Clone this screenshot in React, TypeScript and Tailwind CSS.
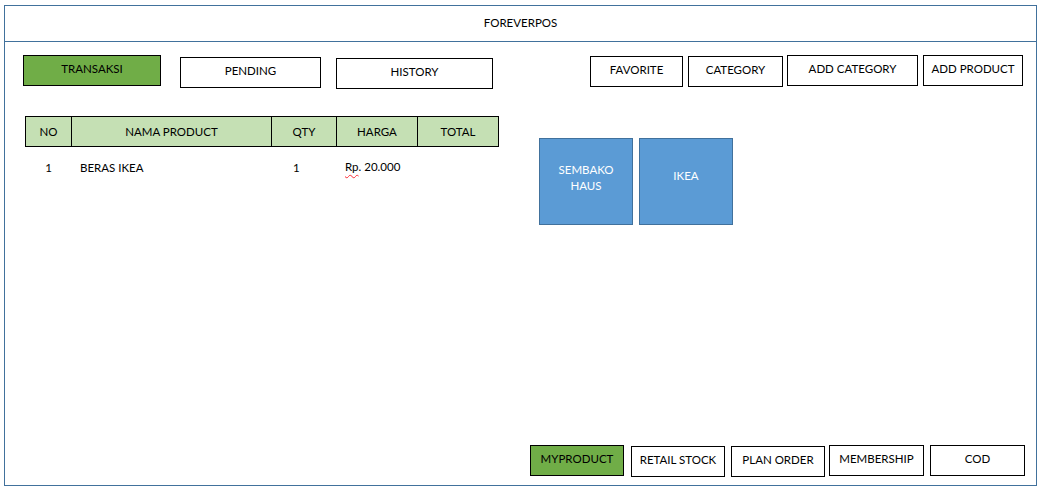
const font = { fontFamily: "Lato, 'Liberation Sans', sans-serif" };

type Btn = { label: string; w: string; mt: string; ml: string; active?: boolean };

const topLeft: Btn[] = [
  { label: "TRANSAKSI", w: "w-[138px]", mt: "mt-0", ml: "ml-[18px]", active: true },
  { label: "PENDING", w: "w-[141px]", mt: "mt-[2px]", ml: "ml-[19px]" },
  { label: "HISTORY", w: "w-[157px]", mt: "mt-[3px]", ml: "ml-[15px]" },
];

const topRight: Btn[] = [
  { label: "FAVORITE", w: "w-[93px]", mt: "mt-[1px]", ml: "ml-auto" },
  { label: "CATEGORY", w: "w-[95px]", mt: "mt-[1px]", ml: "ml-[5px]" },
  { label: "ADD CATEGORY", w: "w-[131px]", mt: "mt-0", ml: "ml-[4px]" },
  { label: "ADD PRODUCT", w: "w-[100px]", mt: "mt-0", ml: "ml-[5px]" },
];

const bottom: Btn[] = [
  { label: "MYPRODUCT", w: "w-[94px]", mt: "mt-0", ml: "ml-auto", active: true },
  { label: "RETAIL STOCK", w: "w-[94px]", mt: "mt-[1px]", ml: "ml-[7px]" },
  { label: "PLAN ORDER", w: "w-[94px]", mt: "mt-[1px]", ml: "ml-[6px]" },
  { label: "MEMBERSHIP", w: "w-[95px]", mt: "mt-0", ml: "ml-[4px]" },
  { label: "COD", w: "w-[95px]", mt: "mt-0", ml: "ml-[6px]" },
];

function Button({ b }: { b: Btn }) {
  return (
    <div
      className={`${b.w} ${b.mt} ${b.ml} h-[31px] shrink-0 border border-black flex items-center justify-center pb-[3px] text-[11.5px] text-black ${
        b.active ? "bg-[#70ad47]" : "bg-white"
      }`}
    >
      {b.label}
    </div>
  );
}

function OrderTable() {
  const cols = "grid grid-cols-[46px_200px_65px_81px_80px]";
  return (
    <div className="ml-[20px] mt-[27px] shrink-0">
      <div className={`${cols} h-[31px] border border-black bg-[#c5e0b4] text-[11.5px]`}>
        <div className="flex items-center justify-center border-r border-black">NO</div>
        <div className="flex items-center justify-center border-r border-black">NAMA PRODUCT</div>
        <div className="flex items-center justify-center border-r border-black">QTY</div>
        <div className="flex items-center justify-center border-r border-black">HARGA</div>
        <div className="flex items-center justify-center">TOTAL</div>
      </div>
      <div className={`${cols} h-[42px] items-center text-[11.5px]`}>
        <div className="text-center pl-[1px]">1</div>
        <div className="pl-[9px]">BERAS IKEA</div>
        <div className="pl-[22px]">1</div>
        <div className="pl-[9px] -mt-[2px]">
          <span className="underline decoration-wavy decoration-red-500 decoration-1 underline-offset-[3px]">Rp</span>. 20.000
        </div>
        <div />
      </div>
    </div>
  );
}

function Tile({ lines, ml, pb }: { lines: string[]; ml: string; pb: string }) {
  return (
    <div
      className={`${ml} ${pb} w-[94px] h-[87px] shrink-0 bg-[#5b9bd5] border border-[#41719c] flex flex-col items-center justify-center text-white text-[11.5px] leading-[16px]`}
    >
      {lines.map((l) => (
        <span key={l}>{l}</span>
      ))}
    </div>
  );
}

export default function App() {
  return (
    <div className="w-[1047px] h-[493px] bg-white pt-[5px] pl-[4px]" style={font}>
      <div className="w-[1033px] h-[481px] border border-[#41719c] flex flex-col text-black">
        <div className="h-[36px] shrink-0 border-b border-[#41719c] flex items-center justify-center pb-[2px] text-[11.5px]">
          FOREVERPOS
        </div>

        <div className="flex-1 flex flex-col">
          <div className="flex items-start pt-[13px] pr-[13px]">
            {topLeft.map((b) => (
              <Button key={b.label} b={b} />
            ))}
            {topRight.map((b) => (
              <Button key={b.label} b={b} />
            ))}
          </div>

          <div className="flex items-start">
            <OrderTable />
            <div className="flex mt-[49px]">
              <Tile lines={["SEMBAKO", "HAUS"]} ml="ml-[40px]" pb="pb-[8px]" />
              <Tile lines={["IKEA"]} ml="ml-[6px]" pb="pb-[12px]" />
            </div>
          </div>

          <div className="flex-1" />

          <div className="flex items-start pr-[11px] pb-[8px]">
            {bottom.map((b) => (
              <Button key={b.label} b={b} />
            ))}
          </div>
        </div>
      </div>
    </div>
  );
}
